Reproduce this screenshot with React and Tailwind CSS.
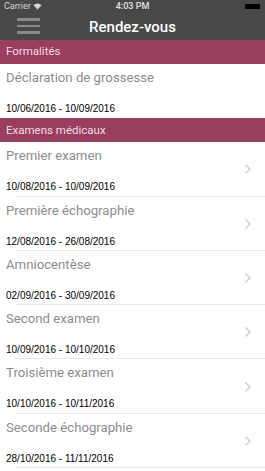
import React from "react";

const exams = [
  { title: "Premier examen", dates: "10/08/2016 - 10/09/2016" },
  { title: "Première échographie", dates: "12/08/2016 - 26/08/2016" },
  { title: "Amniocentèse", dates: "02/09/2016 - 30/09/2016" },
  { title: "Second examen", dates: "10/09/2016 - 10/10/2016" },
  { title: "Troisième examen", dates: "10/10/2016 - 10/11/2016" },
  { title: "Seconde échographie", dates: "28/10/2016 - 11/11/2016" },
];

function Chevron() {
  return (
    <svg width="8" height="12" viewBox="0 0 8 12" className="shrink-0">
      <path d="M1.5 1.5 L6 6 L1.5 10.5" fill="none" stroke="#c7c7cc" strokeWidth="1.2" />
    </svg>
  );
}

function Row({ title, dates, chevron, last }) {
  return (
    <div className="relative h-[54.3px] bg-white flex items-center pl-[6px] pr-[13px]">
      <div className="flex-1 flex flex-col h-full pt-[5px]">
        <div className="text-[13.2px] leading-[18px] text-[#8c8c8c]">{title}</div>
        <div
          className="mt-[16px] text-[10px] leading-[12px] text-black"
          style={{ fontFamily: "'Liberation Sans', Arial, sans-serif" }}
        >
          {dates}
        </div>
      </div>
      {chevron && <Chevron />}
      {!last && <div className="absolute bottom-0 left-[15px] right-0 h-px bg-[#e8e8e8]" />}
    </div>
  );
}

function Section({ label }) {
  return (
    <div className="h-[24px] bg-[#9a3e5f] flex items-center pl-[6px] text-[11.5px] text-[#f3dbe3]">
      {label}
    </div>
  );
}

export default function App() {
  return (
    <div className="w-[265px] h-[471px] overflow-hidden bg-white" style={{ fontFamily: "Roboto, 'Liberation Sans', sans-serif" }}>
      <div className="bg-[#484848] h-[40px] flex flex-col">
        <div className="h-[13px] flex items-center justify-between px-[4px] text-[9px] text-[#d6d6d6]">
          <div className="flex items-center gap-[2px] w-[60px]">
            <span>Carrier</span>
            <svg width="9" height="7" viewBox="0 0 10 8">
              <path d="M5 7.5 L0.5 2.5 A6.5 6.5 0 0 1 9.5 2.5 Z" fill="#d6d6d6" />
            </svg>
          </div>
          <span className="font-medium text-[#e0e0e0]">4:03 PM</span>
          <div className="w-[60px] flex justify-end pr-[1px]">
            <div className="w-[15px] h-[5px] bg-black rounded-[1px]" />
          </div>
        </div>
        <div className="flex-1 relative flex items-center justify-center pt-[1px]">
          <div className="absolute left-[17px] top-[5px] flex flex-col gap-[4px]">
            <div className="w-[23px] h-[2.5px] bg-[#8a8a8a]" />
            <div className="w-[23px] h-[2.5px] bg-[#8a8a8a]" />
            <div className="w-[23px] h-[2.5px] bg-[#8a8a8a]" />
          </div>
          <span className="text-[15px] font-medium text-white">Rendez-vous</span>
        </div>
      </div>
      <Section label="Formalités" />
      <Row title="Déclaration de grossesse" dates="10/06/2016 - 10/09/2016" last />
      <Section label="Examens médicaux" />
      {exams.map((e, i) => (
        <Row key={i} title={e.title} dates={e.dates} chevron />
      ))}
    </div>
  );
}
